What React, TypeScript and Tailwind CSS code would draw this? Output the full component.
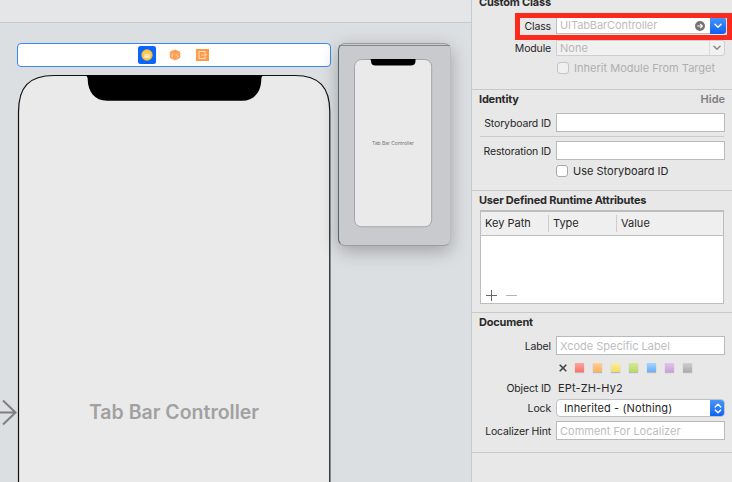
import React from 'react';

interface RowProps {
  label?: string;
  className?: string;
  children: React.ReactNode;
}

const swatches = [
  'from-[#ffa5a0] to-[#fb7169]',
  'from-[#fdd09a] to-[#fbb25d]',
  'from-[#faee9e] to-[#f1dc63]',
  'from-[#d3ea99] to-[#b6da60]',
  'from-[#a5d3fd] to-[#66affa]',
  'from-[#e3c6ea] to-[#cc9fdb]',
  'from-[#cfcfcf] to-[#acacac]',
];

const Row: React.FC<RowProps> = ({ label, className = '', children }) => (
  <div className={`flex items-center ${className}`}>
    <span className="mr-[5px] w-[79px] shrink-0 pt-[2px] text-right text-[10.5px] tracking-[-0.15px] whitespace-nowrap">{label}</span>
    {children}
  </div>
);

const Title: React.FC<{ children: React.ReactNode }> = ({ children }) => (
  <h3 className="text-[11px] leading-[14px] font-bold tracking-[-0.2px] text-[#2a2a2a]">{children}</h3>
);

const Field: React.FC<{ placeholder?: string }> = ({ placeholder }) => (
  <div className="h-[19px] w-[169px] border border-[#b9bbba] bg-white pl-[3px] text-[11px] leading-[18px] text-[#bdbdbd]">
    {placeholder}
  </div>
);

const Chevron = ({ stroke }: { stroke: string }) => (
  <svg width="8" height="6" viewBox="0 0 8 6" fill="none" stroke={stroke} strokeWidth="1.5" strokeLinecap="round" strokeLinejoin="round">
    <path d="M1 1.2 4 4.2 7 1.2" />
  </svg>
);

const SceneDock = () => (
  <div className="absolute top-[43px] left-[17px] flex h-6 w-[314px] items-center rounded-[4px] border border-[#3b87f4] bg-white pl-[120px]">
    <svg width="18" height="18" viewBox="0 0 18 18">
      <rect width="18" height="18" rx="2.5" fill="#0a66fb" />
      <circle cx="9" cy="9" r="5.7" fill="#f7bb32" />
      <circle cx="9" cy="9" r="4.5" fill="#f8c95d" />
      <path d="M6.3 8h5.4v4H6.3z" fill="#fbdf95" />
      <path d="M7 9.5v2.5M9 9.5v2.5M11 8.5v3" stroke="#fff6dc" strokeWidth="1" />
    </svg>
    <svg className="ml-[13px]" width="12" height="12" viewBox="0 0 12 12">
      <path d="M6 .4 11.2 2.8V8.8L6 11.6.8 8.8V2.8Z" fill="#ff9d50" />
      <path d="M1.5 3.4 6 5.5l4.5-2.1M6 5.5v5.3" fill="none" stroke="#ffb377" strokeWidth=".7" />
      <path d="M3.2 5.3v3M7.5 5.6 9 8.3" stroke="#ffd9b8" strokeWidth="1.1" />
    </svg>
    <svg className="ml-[15px]" width="13" height="12" viewBox="0 0 13 12">
      <rect width="13" height="12" fill="#ff9a48" />
      <path d="M9.2 4V2.5H3v7h6.2V8M5.3 6h5M8.7 4.3 10.4 6 8.7 7.7" fill="none" stroke="#ffe0c4" strokeWidth="1" />
    </svg>
  </div>
);

const Canvas = () => (
  <div className="relative h-full w-[471px] overflow-hidden bg-[#dbdfe2]">
    <div className="h-[23px] border-b border-[#c9cacb] bg-[#e5e6e8]" />

    <SceneDock />

    {/* Selected scene */}
    <svg className="absolute top-[74px] left-[17px]" width="315" height="408" viewBox="0 0 315 408">
      <path d="M1.5 410V38C1.5 13 12 1.5 37 1.5H278C302 1.5 312.8 13 312.8 38V410" fill="#eaeaea" stroke="#111" strokeWidth="1.2" />
      <path d="M67 1.2H248Q244.3 1.5 244.3 5C244.3 18 237 26.7 225 26.7H90C78 26.7 70.7 18 70.7 5Q70.7 1.5 67 1.2Z" fill="#000" />
    </svg>
    <div className="absolute top-[399px] left-[18px] w-[312px] text-center text-[19.5px] leading-[26px] font-semibold text-[#a1a1a1]">
      Tab Bar Controller
    </div>
    <svg className="absolute top-[399px] left-0" width="17" height="27" viewBox="0 0 17 27" fill="none" stroke="#7e7f81" strokeWidth="2">
      <path d="M0 13.5H15.5M3 1.5 15.5 13.5 3 25.5" />
    </svg>

    {/* Scene being dragged */}
    <div className="absolute top-[43px] left-[338px] h-[203px] w-[113px] rounded-[7px] border border-[#9a9ea2] border-l-[#566270] border-r-[#bbbdc0] bg-[#c9cacd] shadow-[0_5px_18px_rgba(0,0,0,0.28)]">
      <div className="mt-px border-t border-[#85888c]" />
    </div>
    <svg className="absolute top-[58px] left-[353px]" width="80" height="170" viewBox="0 0 80 170">
      <rect x="1.5" y="1.5" width="77.2" height="167.3" rx="7" fill="#eaeaea" stroke="#a2a4a6" />
      <path d="M17.5 1H62.5V3Q62.5 7.5 57.5 7.5H22.5Q18 7.5 18 3Z" fill="#000" />
    </svg>
    <div className="absolute top-[138px] left-[354px] w-[78px] text-center text-[4.9px] leading-[10px] text-[#737373]">Tab Bar Controller</div>
  </div>
);

const CustomClassSection = () => (
  <section className="relative flex h-[90px] flex-col border-b border-[#c9c9c9]">
    <div className="-mt-[5px] pl-[7px]"><Title>Custom Class</Title></div>
    <Row label="Class" className="mt-[8px] h-[17px]">
      <div className="flex h-[17px] w-[170px]">
        <div className="flex flex-1 items-center border border-r-0 border-[#bfbfbf] bg-white pl-[3px] text-[11px] tracking-[-0.1px] text-[#bdbdbd]">
          UITabBarController
          <svg className="mr-[5px] ml-auto" width="10" height="10" viewBox="0 0 10 10">
            <circle cx="5" cy="5" r="5" fill="#747474" />
            <path d="M2.2 5H7.3M5.2 2.8 7.4 5 5.2 7.2" fill="none" stroke="#fff" strokeWidth="1.2" />
          </svg>
        </div>
        <div className="flex w-4 items-center justify-center rounded-r-[3px] bg-gradient-to-b from-[#4a96fa] to-[#075ff2]">
          <Chevron stroke="#fff" />
        </div>
      </div>
    </Row>
    <Row label="Module" className="mt-[6px] h-[16px]">
      <div className="flex h-[16px] w-[169px] rounded-r-[3px] border border-[#cfcfcf] bg-[#f1f1f1]">
        <div className="flex-1 pl-[3px] text-[11px] leading-[14px] text-[#b6b6b6]">None</div>
        <div className="flex w-[15px] items-center justify-center border-l border-[#dadada]">
          <Chevron stroke="#888" />
        </div>
      </div>
    </Row>
    <Row className="mt-[4px] h-[16px]">
      <span className="ml-px h-3 w-3 rounded-[3px] border border-[#c4c4c4] bg-[#f0f0f0]" />
      <span className="ml-[5px] text-[11px] tracking-[0.02px] text-[#afafaf]">Inherit Module From Target</span>
    </Row>
    {/* Highlight around the class field */}
    <div className="absolute top-[13px] left-[43px] h-[27px] w-[217px] border-[5px] border-[#fc2a1c]" />
  </section>
);

const IdentitySection = () => (
  <section className="h-[101px] border-b border-[#c9c9c9] pt-[2px]">
    <div className="flex justify-between pr-[7px] pl-[7px]">
      <Title>Identity</Title>
      <span className="text-[11px] leading-[14px] font-semibold text-[#808080]">Hide</span>
    </div>
    <Row label="Storyboard ID" className="mt-[7px] h-[19px]"><Field /></Row>
    <div className="mx-2 mt-[4px] h-px bg-[#cbcbcb]" />
    <Row label="Restoration ID" className="mt-[4px] h-[19px]"><Field /></Row>
    <Row className="mt-[3px] h-[16px]">
      <span className="h-3 w-3 rounded-[3px] border border-[#aaa] bg-white" />
      <span className="ml-[5px] text-[11px]">Use Storyboard ID</span>
    </Row>
  </section>
);

const AttributesSection = () => (
  <section className="h-[122px] border-b border-[#c9c9c9] pt-[2px]">
    <div className="pl-[7px]"><Title>User Defined Runtime Attributes</Title></div>
    <div className="mt-[3px] ml-2 flex h-[94px] w-[244px] flex-col border border-t-2 border-[#bdbdbd] bg-white">
      <div className="flex h-[24px] items-center border-b border-[#bfbfbf] bg-[#efefef] text-[11px]">
        <span className="w-[67px] pl-1">Key Path</span>
        <span className="flex h-[17px] w-[68px] items-center border-l border-[#cdcdcd] pl-1">Type</span>
        <span className="flex h-[17px] items-center border-l border-[#cdcdcd] pl-1">Value</span>
      </div>
      <div className="mt-auto mb-[2px] flex pl-[5px]">
        <svg width="32" height="11" viewBox="0 0 32 11" fill="none">
          <path d="M0 5.5H11M5.5 0V11" stroke="#666" />
          <path d="M20 5.5H31" stroke="#b5b5b5" />
        </svg>
      </div>
    </div>
  </section>
);

const DocumentSection = () => (
  <section className="h-[140px] border-b border-[#c9c9c9] pt-[2px]">
    <div className="pl-[7px]"><Title>Document</Title></div>
    <Row label="Label" className="mt-[7px] h-[19px]"><Field placeholder="Xcode Specific Label" /></Row>
    <Row className="mt-[5px] h-[16px]">
      <svg className="mr-[7.5px] ml-[3px]" width="8" height="8" viewBox="0 0 8 8" stroke="#444" strokeWidth="1.6">
        <path d="M.7.7 7.3 7.3M7.3.7.7 7.3" />
      </svg>
      <div className="mb-px flex gap-[9px]">
        {swatches.map(color => (
          <span key={color} className={`h-[9px] w-[9px] bg-gradient-to-b shadow-[0_1px_1px_rgba(0,0,0,0.2)] ${color}`} />
        ))}
      </div>
    </Row>
    <Row label="Object ID" className="mt-[4px] h-[16px]">
      <span className="pt-px pl-[2px] text-[11px] tracking-[0.15px]">EPt-ZH-Hy2</span>
    </Row>
    <Row label="Lock" className="mt-[3px] h-[18px]">
      <div className="flex h-[18px] w-[169px] overflow-hidden rounded-[4px] border border-[#c2c2c2] bg-white">
        <span className="flex-1 pl-[7px] text-[11px] leading-[17px] tracking-[0.1px]">Inherited - (Nothing)</span>
        <span className="-m-px flex w-[15px] items-center justify-center bg-gradient-to-b from-[#4d98fa] to-[#0560f4]">
          <svg width="8" height="11" viewBox="0 0 8 11" fill="none" stroke="#fff" strokeWidth="1.4" strokeLinecap="round" strokeLinejoin="round">
            <path d="M1.2 4 4 1.2 6.8 4M1.2 7 4 9.8 6.8 7" />
          </svg>
        </span>
      </div>
    </Row>
    <Row label="Localizer Hint" className="mt-[4px] h-[19px]"><Field placeholder="Comment For Localizer" /></Row>
  </section>
);

export default function App() {
  return (
    <div className="flex h-[482px] w-[732px] overflow-hidden bg-[#e8e8e8] font-['Inter','Liberation_Sans',sans-serif] text-[#262626]">
      <Canvas />
      <aside className="w-[261px] shrink-0 border-l border-[#c8cacb]">
        <CustomClassSection />
        <IdentitySection />
        <AttributesSection />
        <DocumentSection />
      </aside>
    </div>
  );
}
